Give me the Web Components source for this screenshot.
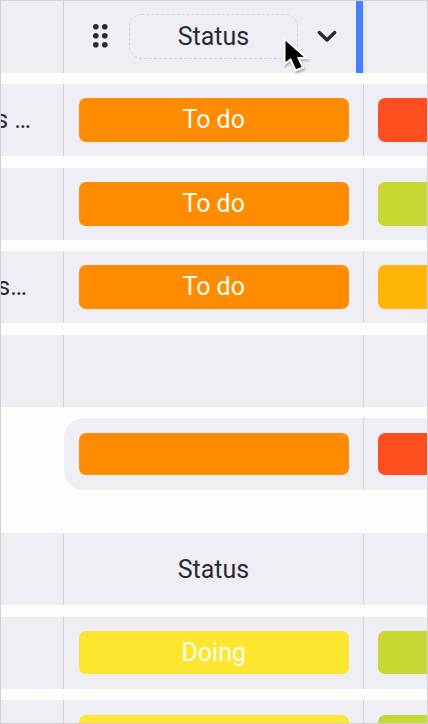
<!DOCTYPE html>
<html lang="en"><head><meta charset="utf-8"><title>Board</title>
<style>html,body{margin:0;width:428px;height:724px;overflow:hidden;background:#fdfdfd}</style></head>
<body><board-view></board-view>
<script>
class BoardPill extends HTMLElement{
  constructor(){super();this.attachShadow({mode:'open'}).innerHTML=`<style>
  :host{display:flex;box-sizing:border-box;height:var(--h,44px);border-radius:7px;background:var(--pill);color:#fffdf0;align-items:center;justify-content:center;width:270.4px;flex:none}
  span{line-height:28px;padding:0 1px 0 0}</style><span><slot></slot></span>`;}
}
customElements.define('board-pill',BoardPill);
class BoardRow extends HTMLElement{
  constructor(){super();this.attachShadow({mode:'open'}).innerHTML=`<style>
  :host{display:grid;grid-template-columns:64px 300px 300px;height:72px;flex:none;margin-bottom:var(--gap,12px)}
  div{box-sizing:border-box;background:#efeef4;border-right:1px solid #d3d2d7;display:flex;min-width:0;padding-top:var(--top,14px)}
  .name{justify-content:flex-end;padding-right:32px;white-space:nowrap;padding-top:21px;line-height:30px}
  .status,.priority{padding-left:15px}
  .priority{padding-left:14px}
  :host([heading]) .status{padding:0;justify-content:center;align-items:center}
  :host([adding]) .name{background:transparent;border-color:transparent}
  :host([adding]) .status{border-radius:20px 0 0 20px}
  </style><div class="name"><slot name="name"></slot></div><div class="status"><slot></slot></div><div class="priority"><slot name="priority"></slot></div>`;}
}
customElements.define('board-row',BoardRow);
class ColumnHeading extends HTMLElement{
  constructor(){super();this.attachShadow({mode:'open'}).innerHTML=`<style>
  :host{display:flex;width:300px;height:73px;align-items:center;box-sizing:border-box;position:relative}
  .grip{width:18px;height:24px;margin:0 0 2px 28px;flex:none}
  .label{box-sizing:border-box;width:169px;height:46px;margin-left:19px;flex:none;display:flex;align-items:center;justify-content:center}
  .label{position:relative}.label svg{position:absolute;inset:0}
  .chev{width:24px;height:16px;margin:0 0 2px 17px;flex:none}
  .resize{position:absolute;left:292px;top:0;width:7px;height:73px;background:#467fff;box-shadow:3px 0 3px #e4e5e2}
  .cursor{position:absolute;left:217px;top:34px;width:36px;height:42px;filter:drop-shadow(1px 2px 1px #0004)}
  </style>
  <svg class="grip" viewBox="0 0 18 24" fill="#29282f"><circle cx="3.8" cy="2.8" r="2.8"/><circle cx="12.8" cy="2.8" r="2.8"/><circle cx="3.8" cy="11.8" r="2.8"/><circle cx="12.8" cy="11.8" r="2.8"/><circle cx="3.8" cy="20.8" r="2.8"/><circle cx="12.8" cy="20.8" r="2.8"/></svg>
  <div class="label"><svg width="169" height="46"><rect x=".5" y=".5" width="168" height="44" rx="12" fill="none" stroke="#d3d2d8" stroke-dasharray="3 2"/></svg><slot></slot></div>
  <svg class="chev" viewBox="0 0 24 16"><path d="M4.300 4.500 12 12 19.700 4.500" fill="none" stroke="#29282f" stroke-width="3.4" stroke-linecap="round" stroke-linejoin="round"/></svg>
  <div class="resize"></div>
  <svg class="cursor" viewBox="0 0 36 42"><path d="M3.500 4.500V30L9.500 25.500L14.500 36.500L22 33.500L17.500 24H25.500Z" fill="#000" stroke="#fff" stroke-width="2"/></svg>`;}
}
customElements.define('column-heading',ColumnHeading);
class BoardView extends HTMLElement{
  constructor(){super();this.attachShadow({mode:'open'}).innerHTML=`<style>
  :host{display:flex;flex-direction:column;width:428px;height:724px;overflow:hidden;position:relative;background:#fdfdfd;font:25px Roboto,sans-serif;color:#2b2a30}
  .frame{position:absolute;inset:0;border:1px solid #d2d1d5;pointer-events:none}
  .first{height:73px;--gap:11px}.o{--pill:#ff8c00}.r{--pill:#ff4d1f}.g{--pill:#c6d831}.a{--pill:#ffb508}.y{--pill:#fce62f}
  </style>
  <board-row heading class="first"><column-heading>Status</column-heading></board-row>
  <board-row><span slot="name">s …</span><board-pill class="o">To do</board-pill><board-pill slot="priority" class="r"></board-pill></board-row>
  <board-row style="--gap:11px"><board-pill class="o">To do</board-pill><board-pill slot="priority" class="g"></board-pill></board-row>
  <board-row><span slot="name" style="margin-right:4px">s…</span><board-pill class="o">To do</board-pill><board-pill slot="priority" class="a"></board-pill></board-row>
  <board-row style="--gap:11px"></board-row>
  <board-row adding style="--gap:43px;--top:15px;--h:42px"><board-pill class="o"></board-pill><board-pill slot="priority" class="r"></board-pill></board-row>
  <board-row heading><span>Status</span></board-row>
  <board-row style="--gap:11px;--h:43px"><board-pill class="y">Doing</board-pill><board-pill slot="priority" class="g"></board-pill></board-row>
  <board-row style="--top:15px"><board-pill class="y"></board-pill><board-pill slot="priority" class="g"></board-pill></board-row>
  <div class="frame"></div>`;}
}
customElements.define('board-view',BoardView);
</script></body></html>
